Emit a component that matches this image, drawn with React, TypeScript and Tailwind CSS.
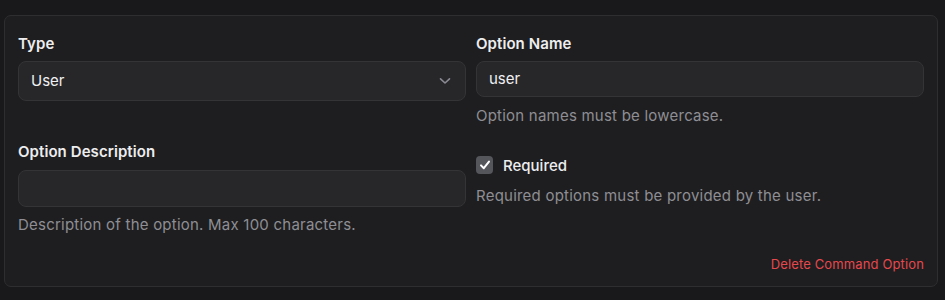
import React from "react";

export default function App() {
  return (
    <div
      className="w-[945px] h-[300px] bg-[#19191b] pt-[15px] pl-[4px] pr-[7px]"
      style={{ fontFamily: "Inter, 'Noto Sans', sans-serif" }}
    >
      <div className="h-[272px] rounded-[7px] border border-[#2e2e31] bg-[#1e1e20] px-[13px] pt-[18px]">
        <div className="grid grid-cols-2 gap-x-[10px]">
          {/* Left column */}
          <div className="flex flex-col">
            <label className="text-[15px] leading-[20px] font-semibold tracking-[0.005em] text-[#ededef]">Type</label>
            <div className="mt-[7px] h-[40px] rounded-[8px] border border-[#343437] bg-[#27272a] flex items-center justify-between pl-[12px] pr-[14px]">
              <span className="text-[15px] text-[#f0f0f2]">User</span>
              <svg width="12" height="8" viewBox="0 0 12 8" fill="none">
                <path d="M1.5 1.8 L6 6 L10.5 1.8" stroke="#8a8a92" strokeWidth="1.6" strokeLinecap="round" strokeLinejoin="round" />
              </svg>
            </div>
            <label className="mt-[41px] text-[15px] leading-[20px] font-semibold tracking-[0.005em] text-[#ededef]">Option Description</label>
            <div className="mt-[8px] h-[37px] rounded-[8px] border border-[#343437] bg-[#27272a]" />
            <p className="mt-[8px] text-[15px] leading-[20px] tracking-[0.015em] text-[#8e8e94]">Description of the option. Max 100 characters.</p>
          </div>
          {/* Right column */}
          <div className="flex flex-col">
            <label className="text-[15px] leading-[20px] font-semibold tracking-[0.005em] text-[#ededef]">Option Name</label>
            <div className="mt-[7px] h-[36px] rounded-[8px] border border-[#343437] bg-[#27272a] flex items-center pl-[12px]">
              <span className="text-[15px] text-[#f0f0f2]">user</span>
            </div>
            <p className="mt-[9px] text-[15px] leading-[20px] tracking-[0.015em] text-[#8e8e94]">Option names must be lowercase.</p>
            <div className="mt-[27px] flex items-center gap-[10px]">
              <div className="w-[17px] h-[18px] rounded-[4px] bg-[#55555c] flex items-center justify-center">
                <svg width="12" height="12" viewBox="0 0 12 12" fill="none">
                  <path d="M2 6.4 L4.8 9.2 L10 2.6" stroke="#ffffff" strokeWidth="2" strokeLinecap="round" strokeLinejoin="round" />
                </svg>
              </div>
              <span className="text-[15px] leading-[22px] font-medium text-[#ededef] pt-[2px]">Required</span>
            </div>
            <p className="mt-[9px] text-[15px] leading-[20px] tracking-[0.015em] text-[#8e8e94]">Required options must be provided by the user.</p>
          </div>
        </div>
        <div className="mt-[19px] flex justify-end">
          <button className="text-[13px] leading-[20px] tracking-[0.01em] text-[#e5484d]">Delete Command Option</button>
        </div>
      </div>
    </div>
  );
}
